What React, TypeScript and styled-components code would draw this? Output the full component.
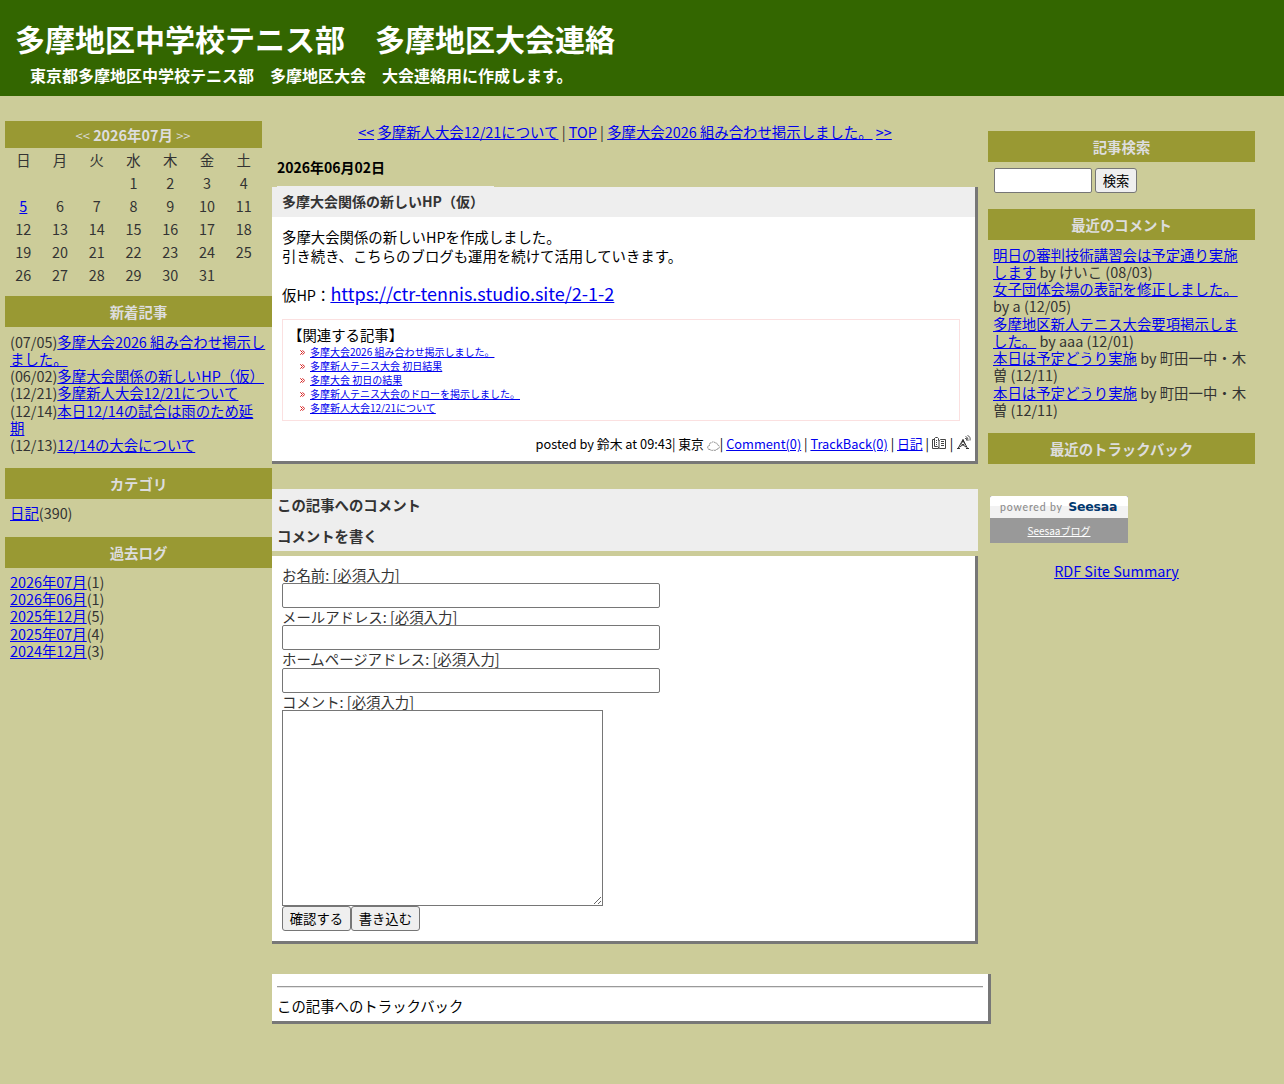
import { Fragment } from "react";
import { createGlobalStyle, styled } from "styled-components";

const recentPosts = [
  { date: "07/05", title: "多摩大会2026 組み合わせ掲示しました。" },
  { date: "06/02", title: "多摩大会関係の新しいHP（仮）" },
  { date: "12/21", title: "多摩新人大会12/21について" },
  { date: "12/14", title: "本日12/14の試合は雨のため延期" },
  { date: "12/13", title: "12/14の大会について" },
];

const archives = [
  { month: "2026年07月", count: 1 },
  { month: "2026年06月", count: 1 },
  { month: "2025年12月", count: 5 },
  { month: "2025年07月", count: 4 },
  { month: "2024年12月", count: 3 },
];

const recentComments = [
  { title: "明日の審判技術講習会は予定通り実施します", by: "けいこ (08/03)" },
  { title: "女子団体会場の表記を修正しました。", by: "a (12/05)" },
  { title: "多摩地区新人テニス大会要項掲示しました。", by: "aaa (12/01)" },
  { title: "本日は予定どうり実施", by: "町田一中・木曽 (12/11)" },
  { title: "本日は予定どうり実施", by: "町田一中・木曽 (12/11)" },
];

const relatedPosts = [
  "多摩大会2026 組み合わせ掲示しました。",
  "多摩新人テニス大会 初日結果",
  "多摩大会 初日の結果",
  "多摩新人テニス大会のドローを掲示しました。",
  "多摩新人大会12/21について",
];

const weekDays = ["日", "月", "火", "水", "木", "金", "土"];
const firstDayOffset = 3;
const days = Array.from({ length: 31 }, (_, i) => i + 1);

export default function App() {
  return (
    <>
      <GlobalStyle />
      <Header>
        <BlogTitle>多摩地区中学校テニス部　多摩地区大会連絡</BlogTitle>
        <BlogDescription>東京都多摩地区中学校テニス部　多摩地区大会　大会連絡用に作成します。</BlogDescription>
      </Header>
      <Columns>
        <LeftSide />
        <Main>
          <PageNav>
            <a href="#">&lt;&lt;</a> <a href="#">多摩新人大会12/21について</a> | <a href="#">TOP</a> |{" "}
            <a href="#">多摩大会2026 組み合わせ掲示しました。</a> <a href="#">&gt;&gt;</a>
          </PageNav>
          <PostDate>2026年06月02日</PostDate>
          <Post />
          <CommentHeading>
            <span>この記事へのコメント</span>
            <span>コメントを書く</span>
          </CommentHeading>
          <CommentForm />
          <Trackback>
            <Rule />
            この記事へのトラックバック
          </Trackback>
        </Main>
        <RightSide />
      </Columns>
    </>
  );
}

const LeftSide = () => {
  return (
    <Left>
      <CalendarTitle>
        <small>&lt;&lt;</small> 2026年07月 <small>&gt;&gt;</small>
      </CalendarTitle>
      <Calendar>
        {weekDays.map((day) => <span key={day}>{day}</span>)}
        {Array.from({ length: firstDayOffset }, (_, i) => <span key={`empty${i}`} />)}
        {days.map((day) => (
          <span key={day}>{day === 5 ? <a href="#">{day}</a> : day}</span>
        ))}
      </Calendar>
      <SideTitle>新着記事</SideTitle>
      <SideText>
        {recentPosts.map((post) => (
          <div key={post.date}>({post.date})<a href="#">{post.title}</a></div>
        ))}
      </SideText>
      <SideTitle>カテゴリ</SideTitle>
      <SideText $top={4.9}><a href="#">日記</a>(390)</SideText>
      <SideTitle>過去ログ</SideTitle>
      <SideText $top={4.7}>
        {archives.map((item) => (
          <div key={item.month}><a href="#">{item.month}</a>({item.count})</div>
        ))}
      </SideText>
    </Left>
  );
};

const RightSide = () => {
  return (
    <Right>
      <SideTitle>記事検索</SideTitle>
      <Search>
        <SearchInput />
        <Button>検索</Button>
      </Search>
      <SideTitle>最近のコメント</SideTitle>
      <SideText>
        {recentComments.map((comment, i) => (
          <div key={i}><a href="#">{comment.title}</a> by {comment.by}</div>
        ))}
      </SideText>
      <SideTitle>最近のトラックバック</SideTitle>
      <Powered>
        <PoweredTop>
          powered by <SeesaaLogo>Seesaa</SeesaaLogo>
        </PoweredTop>
        <PoweredLink href="#">Seesaaブログ</PoweredLink>
      </Powered>
      <Rdf><a href="#">RDF Site Summary</a></Rdf>
    </Right>
  );
};

const Post = () => {
  return (
    <PostBox>
      <PostTitle>多摩大会関係の新しいHP（仮）</PostTitle>
      <PostBody>
        <p>多摩大会関係の新しいHPを作成しました。</p>
        <p>引き続き、こちらのブログも運用を続けて活用していきます。</p>
        <SiteLine>仮HP：<SiteLink href="#">https://ctr-tennis.studio.site/2-1-2</SiteLink></SiteLine>
        <Related>
          <RelatedTitle>【関連する記事】</RelatedTitle>
          {relatedPosts.map((title) => (
            <RelatedItem key={title}>
              <ArrowIcon />
              <a href="#">{title}</a>
            </RelatedItem>
          ))}
        </Related>
      </PostBody>
      <Posted>
        posted by 鈴木 at 09:43| 東京 <CloudIcon />| <a href="#">Comment(0)</a> |{" "}
        <a href="#">TrackBack(0)</a> | <a href="#">日記</a> | <BookIcon /> | <AntennaIcon />
      </Posted>
    </PostBox>
  );
};

const CommentForm = () => {
  return (
    <FormBox>
      {["お名前", "メールアドレス", "ホームページアドレス"].map((label) => (
        <Fragment key={label}>
          <Label>{label}: [必須入力]</Label>
          <TextInput />
        </Fragment>
      ))}
      <Label>コメント: [必須入力]</Label>
      <TextArea />
      <Buttons>
        <Button>確認する</Button>
        <Button>書き込む</Button>
      </Buttons>
    </FormBox>
  );
};

const ArrowIcon = () => (
  <svg width="5" height="5" viewBox="0 0 5 5" fill="none" stroke="#d00000" strokeWidth=".9">
    <path d="M.3.3L2.500 2.500L.3 4.700M2.500.3L4.700 2.500L2.500 4.700" />
  </svg>
);

const CloudIcon = () => (
  <IconSvg width="13" height="12" viewBox="0 0 13 12" $drop={3}>
    <path
      d="M3 9.500C1.300 9.500 .5 8.500 .7 7.300C.6 6.200 1.500 5.500 2.500 5.500C2.300 3.300 3.300 2.500 4.700 2.600C5.600 1.500 7.500 1.600 8.200 3C9.700 2.700 10.600 3.700 10.400 5C12 5 12.600 6.300 12.200 7.500C12 8.700 11 9.200 10 9C9.400 10.300 7.600 10.800 6.600 10C5.400 10.700 3.800 10.500 3 9.500"
      fill="none" stroke="#888" strokeDasharray="2 .6"
    />
  </IconSvg>
);

const BookIcon = () => (
  <IconSvg width="14" height="13" viewBox="0 0 14 13" $drop={1} $gap={1}>
    <path
      d="M2.500 1.500V2.500H.5V11.500H6.500L7 12L7.500 11.500H13.500V2.500H8.500L7.500 3.500H6.500V1.500L5.500.5H3.500L2.500 1.500V9.500H5.500L7 11V3.500M4 3.500H5M4 5.500H5M4 7.500H5M9 4.500H12M9 6.500H12M9 8.500H12"
      fill="none" stroke="#444" strokeWidth="1"
    />
  </IconSvg>
);

const AntennaIcon = () => (
  <IconSvg width="15" height="15" viewBox="-1 0 15 15" $drop={1}>
    <path
      d="M1 13.500L6 4.500L10.500 13.500M6 4.500V8M4 8.500L9 12M8 8.500L2.500 12M5 6.500H7M0 13.500H3M9 13.500H12"
      fill="none" stroke="#333" strokeWidth="1"
    />
    <path d="M8 3.500H9.500V5.500M8.500 1.500Q11.500 2 11 6M10.500.5Q13.800 1.500 13 5.500" fill="none" stroke="#444" strokeWidth=".9" />
  </IconSvg>
);

const GlobalStyle = createGlobalStyle`
  * {
    box-sizing: border-box;
  }

  body {
    margin: 0;
    min-height: 1084px;
    background-color: #cccc99;
    color: #333;
    font-family: "Noto Sans CJK JP", sans-serif;
    font-size: 14.4px;
    line-height: 17.28px;
  }

  p {
    margin: 0;
  }

  a {
    color: #0000ee;
    text-decoration: underline;
  }

  input, textarea, button {
    font-family: "Noto Sans CJK JP", sans-serif;
    font-size: 13.333px;
  }
`

const Header = styled.header`
  height: 96px;
  padding: 20px 15px 0;
  background-color: #336600;
  color: #fff;
`

const BlogTitle = styled.h1`
  margin: 0;
  font-size: 30px;
  line-height: 36px;
`

const BlogDescription = styled.h2`
  margin: 10px 0 0 15px;
  font-size: 16px;
  line-height: 19px;
`

const Columns = styled.div`
  display: flex;
  align-items: flex-start;
`

const Left = styled.aside`
  width: 267px;
  margin: 25px 0 0 5px;
`

const Right = styled.aside`
  width: 267px;
  margin: 35px 0 0 10px;
`

const Main = styled.main`
  width: 706px;
  padding-top: 27px;
  color: #000;
`

const SideTitle = styled.h2`
  height: 31px;
  margin: 0;
  background-color: #999933;
  color: #ddd;
  font-size: 14.4px;
  line-height: 31px;
  text-align: center;
`

const CalendarTitle = styled(SideTitle)`
  width: 257px;
  height: 27px;
  padding-right: 1px;
  line-height: 27px;

  small {
    font-size: 12.96px;
    font-weight: 400;
  }
`

const Calendar = styled.div`
  display: grid;
  grid-template-columns: repeat(7, 1fr);
  grid-auto-rows: 23px;
  width: 257px;
  margin-bottom: 10px;
  line-height: 23px;
  text-align: center;
`

const SideText = styled.div<{ $top?: number }>`
  width: 257px;
  margin: ${({ $top = 5.5 }) => `${$top}px 0 ${20.4 - $top}px 5px`};
`

const Search = styled.div`
  display: flex;
  gap: 3px;
  margin: 6px 0 16px 6px;
`

const SearchInput = styled.input`
  width: 98px;
  height: 25px;
  border: 1px solid #767676;
  border-radius: 2px;
  background-color: #fff;
`

const Button = styled.button`
  height: 25px;
  padding: 0 6.8px;
  border: 1px solid #767676;
  border-radius: 3px;
  background-color: #efefef;
  color: #000;
  line-height: 23px;
`

const Powered = styled.div`
  width: 138px;
  margin: 32px 0 0 2px;
  background-color: #999;
  color: #fff;
  text-align: center;
`

const PoweredTop = styled.div`
  display: flex;
  align-items: center;
  height: 22px;
  padding: 1px 0 0 10px;
  border-radius: 2px 2px 0 0;
  background: linear-gradient(#fff 45%, #f2f2f2 45%);
  color: #888;
  font-family: Lato, sans-serif;
  font-size: 10.5px;
  letter-spacing: .85px;
  white-space: pre;
`

const SeesaaLogo = styled.b`
  margin: -2px 0 0 2px;
  background:
    radial-gradient(circle at 37px 11px, #e87050 1.500px, transparent 2px),
    radial-gradient(circle at 45px 11px, #e87050 1.500px, transparent 2px);
  color: #003870;
  font-family: "DejaVu Sans", sans-serif;
  font-size: 12.5px;
  letter-spacing: -.2px;
`

const PoweredLink = styled.a`
  display: block;
  height: 25px;
  color: #fff;
  font-size: 10px;
  line-height: 26px;
`

const Rdf = styled.div`
  margin-top: 19px;
  padding-right: 10px;
  text-align: center;
`

const PageNav = styled.div`
  color: #333;
  text-align: center;
`

const PostDate = styled.h2`
  margin: 19px 0 10.72px 5px;
  font-size: 14px;
  line-height: 17px;
`

const PostBox = styled.article`
  height: 277px;
  border: solid #777;
  border-width: 0 3px 3px 0;
  background-color: #fff;
`

const PostTitle = styled.h3`
  display: flow-root;
  height: 30px;
  margin: 0;
  padding-left: 10px;
  background-color: #eee;
  color: #333;
  font-size: 14px;
  line-height: 29px;

  /* tab edge above the title bar */
  &::before {
    content: "";
    display: block;
    width: 217px;
    height: 1px;
    margin: -1px 0 0 -5px;
    background-color: #eee;
  }
`

const PostBody = styled.div`
  padding: 10px 15px 0 10px;
  line-height: 19px;
`

const SiteLine = styled.p`
  margin-top: 19px;
  line-height: 19px;
`

const SiteLink = styled.a`
  font-size: 18px;
`

const Related = styled.div`
  height: 102px;
  margin-top: 15px;
  padding: 7px 5px;
  border: 1px solid #fbe0e0;
`

const RelatedTitle = styled.div`
  height: 18px;
  line-height: 16px;
`

const RelatedItem = styled.div`
  display: flex;
  align-items: center;
  gap: 5px;
  height: 14px;
  padding-left: 12px;
  font-size: 10px;
  line-height: 14px;
`

const Posted = styled.div`
  margin-top: 14px;
  padding-right: 4px;
  font-size: 12.8px;
  line-height: 18px;
  text-align: right;
`

const IconSvg = styled.svg<{ $drop: number; $gap?: number }>`
  margin-right: ${(props) => props.$gap ?? 0}px;
  margin-bottom: ${(props) => -props.$drop}px;
`

const CommentHeading = styled.h3`
  display: flex;
  flex-direction: column;
  margin: 25px 0 5px;
  padding-left: 5px;
  background-color: #eee;
  color: #333;
  font-size: 14.4px;
  line-height: 31px;
`

const FormBox = styled.div`
  display: flex;
  flex-direction: column;
  align-items: flex-start;
  height: 388px;
  padding: 10px 10px 0;
  border: solid #777;
  border-width: 0 3px 3px 0;
  background-color: #fff;
  color: #333;
`

const Label = styled.label`
  height: 17.24px;
`

const TextInput = styled.input`
  width: 378px;
  height: 25px;
  border: 1px solid #767676;
  border-radius: 2px;
  background-color: #fff;
`

const TextArea = styled.textarea`
  width: 321px;
  height: 196px;
  border: 1px solid #767676;
`

const Buttons = styled.div`
  display: flex;
`

const Trackback = styled.div`
  width: 719px;
  height: 50px;
  margin-top: 30px;
  padding: 12px 5px 0;
  border: solid #777;
  border-width: 0 3px 3px 0;
  background-color: #fff;
`

const Rule = styled.hr`
  height: 2px;
  margin: 0 0 9px;
  border: solid #9a9a9a;
  border-width: 1px 0 0;
  border-bottom: 1px solid #e4e4e4;
`
